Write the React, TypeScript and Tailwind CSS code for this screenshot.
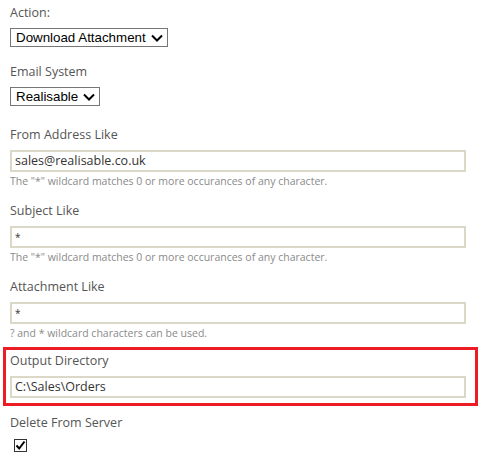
import { FC, ReactNode } from 'react'

const Chevron: FC = () => (
  <svg width="12" height="8" viewBox="0 0 12 8" className="ml-[5px] shrink-0" aria-hidden="true">
    <path d="M1 1.5 L6 6.5 L11 1.5" fill="none" stroke="#000" strokeWidth="2" />
  </svg>
)

const Select: FC<{ value: string }> = ({ value }) => (
  <div className="mt-[6px] flex">
    <div className="flex h-[19px] items-center border border-[#767676] bg-white pl-[5px] pr-[4px] font-['Liberation_Sans',Arial,sans-serif] text-[13.33px] leading-none text-black">
      <span>{value}</span>
      <Chevron />
    </div>
  </div>
)

const Label: FC<{ children: ReactNode }> = ({ children }) => (
  <div className="h-[18px] text-[12.5px] leading-[18px] text-[#555]">{children}</div>
)

const TextInput: FC<{ value: string; small?: boolean }> = ({ value, small }) => (
  <div
    className={
      'mt-[6px] flex h-[22px] w-[456px] items-center border-2 border-[#dcd8c8] bg-white px-[3px] leading-none text-[#333] ' +
      (small ? 'text-[10px]' : 'text-[12.5px]')
    }
  >
    {value}
  </div>
)

const Help: FC<{ children: ReactNode }> = ({ children }) => (
  <div className="mt-[1px] h-[16px] text-[10.5px] leading-[16px] text-[#8a8a8a]">{children}</div>
)

const wildcard = 'The "*" wildcard matches 0 or more occurances of any character.'

export default function App() {
  return (
    <div className="h-[467px] w-[489px] bg-white pt-[4px] font-['Open_Sans','Noto_Sans',sans-serif]">
      <div className="px-[10px]">
        {/* Action */}
        <Label>Action:</Label>
        <Select value="Download Attachment" />

        {/* Email system */}
        <div className="mt-[16px]">
          <Label>Email System</Label>
          <Select value="Realisable" />
        </div>

        <div className="mt-[20px]">
          <Label>From Address Like</Label>
          <TextInput value="sales@realisable.co.uk" />
          <Help>{wildcard}</Help>
        </div>

        <div className="mt-[13px]">
          <Label>Subject Like</Label>
          <TextInput value="*" small />
          <Help>{wildcard}</Help>
        </div>

        <div className="mt-[13px]">
          <Label>Attachment Like</Label>
          <TextInput value="*" small />
          <Help>? and * wildcard characters can be used.</Help>
        </div>
      </div>

      {/* Highlighted field */}
      <div className="ml-[3px] mt-[6px] w-[475px] border-[3px] border-[#ec1c24] pb-[5px] pl-[4px] pt-[2px]">
        <Label>Output Directory</Label>
        <TextInput value="C:\Sales\Orders" />
      </div>

      <div className="mt-[8px] px-[10px]">
        <Label>Delete From Server</Label>
        <div className="ml-[4px] mt-[7px] flex h-[13px] w-[13px] items-center justify-center border border-[#333] bg-white">
          <svg width="11" height="11" viewBox="0 0 11 11" aria-hidden="true">
            <path d="M1.5 5.5 L4.2 8.5 L9.5 1.5" fill="none" stroke="#000" strokeWidth="2" />
          </svg>
        </div>
      </div>
    </div>
  )
}
